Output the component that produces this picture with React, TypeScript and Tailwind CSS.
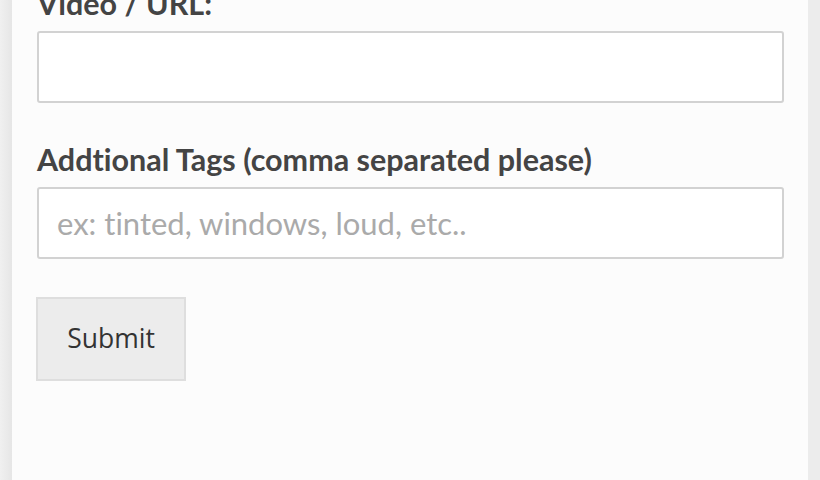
import React from "react";

export default function App() {
  return (
    <div className="w-[820px] h-[480px] bg-[#ececec] flex overflow-hidden [font-variant-ligatures:none]" style={{ fontFamily: "Lato, 'Open Sans', sans-serif" }}>
      <div className="w-[12px] bg-gradient-to-r from-[#f0f0f0] to-[#e6e6e6]" />
      <div className="w-[796px] h-full bg-[#fcfcfc] px-[25px] overflow-hidden">
        <div className="-mt-[16px] flex flex-col">
          <label className="text-[30.5px] font-bold text-[#444] leading-[38px]">Video / URL:</label>
          <input
            className="mt-[9px] h-[72px] w-[747px] border-2 border-[#d2d2d2] rounded-[3px] bg-white px-[18px] text-[31px] outline-none [font-variant-ligatures:none]"
            type="text"
          />
          <label className="mt-[37px] text-[30.5px] font-bold text-[#444] leading-[38px]">Addtional Tags (comma separated please)</label>
          <input
            className="mt-[9px] h-[72px] w-[747px] border-2 border-[#d2d2d2] rounded-[3px] bg-white px-[18px] text-[31px] text-[#444] placeholder:text-[#aaa] outline-none [font-variant-ligatures:none]"
            type="text"
            placeholder="ex: tinted, windows, loud, etc.."
          />
          <div className="mt-[38px] -ml-[1px]">
            <button className="w-[150px] h-[84px] bg-[#ececec] border-2 border-[#dedede] text-[26.5px] text-[#333]" style={{ fontFamily: "'Open Sans', sans-serif" }}>
              Submit
            </button>
          </div>
        </div>
      </div>
      <div className="flex-1 bg-[#ececec]" />
    </div>
  );
}
